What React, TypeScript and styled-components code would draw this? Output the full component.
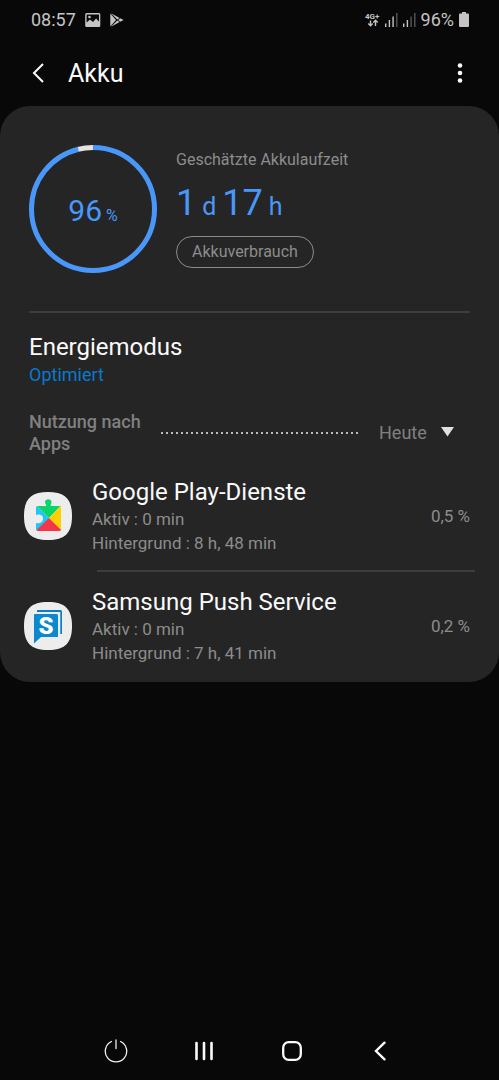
import React from 'react';
import styled, { createGlobalStyle } from 'styled-components';

const GlobalStyle = createGlobalStyle`
  * { box-sizing: border-box; }
  body { margin: 0; background: #080808; }
  button, select { font: inherit; color: inherit; background: none; border: 0; padding: 0; margin: 0; }
  h1, h2, h3, p, ul { margin: 0; padding: 0; font-weight: 400; }
  svg { display: block; flex: none; }
`;

const Screen = styled.div`
  min-height: 100vh;
  display: flex;
  flex-direction: column;
  background: #080808;
  color: #fafafa;
  font-family: Roboto, 'Liberation Sans', sans-serif;
`;

const StatusBar = styled.div`
  display: flex;
  align-items: center;
  justify-content: space-between;
  height: 39px;
  padding: 0 30px 0 31px;
  color: #c4c4c4;
  font-size: 18px;
  line-height: 24px;
`;

const StatusGroup = styled.div<{ $gap: number }>`
  display: flex;
  align-items: center;
  gap: ${p => p.$gap}px;
`;

const AppBar = styled.header`
  display: flex;
  align-items: center;
  height: 67px;
  padding: 0 27px 0 26px;
`;

const IconButton = styled.button`
  display: flex;
  align-items: center;
  justify-content: center;
  width: 24px;
  height: 32px;
`;

const Title = styled.h1`
  flex: 1;
  margin-left: 18px;
  padding-top: 2px;
  font-size: 25px;
  line-height: 32px;
`;

const Card = styled.main`
  padding: 39px 29px 8px;
  border-radius: 30px;
  background: #252525;
`;

const Summary = styled.section`
  display: flex;
  gap: 19px;
  padding-bottom: 38px;
  border-bottom: 2px solid #3d3d3d;
`;

const Gauge = styled.div`
  display: grid;
  place-items: center;
  width: 128px;
  height: 128px;
  > * { grid-area: 1 / 1; }
`;

const GaugeValue = styled.div`
  display: flex;
  align-items: baseline;
  gap: 4px;
  padding-top: 8px;
  color: #4a97fa;
  font-size: 30px;
  line-height: 36px;
`;

const Small = styled.span<{ $size: number }>`
  font-size: ${p => p.$size}px;
`;

const Estimate = styled.div`
  display: flex;
  flex-direction: column;
  align-items: flex-start;
  padding-top: 5px;
`;

const Caption = styled.p`
  color: #8c8c8c;
  font-size: 16px;
  line-height: 20px;
`;

const Duration = styled.p`
  display: flex;
  align-items: baseline;
  gap: 6px;
  margin: 12px 0 8px;
  color: #4a97fa;
  font-size: 36px;
  line-height: 42px;
`;

const UsageButton = styled.button`
  height: 32px;
  padding: 0 15px;
  border: 1px solid #8c8c8c;
  border-radius: 16px;
  color: #8c8c8c;
  font-size: 16px;
  line-height: 20px;
`;

const Mode = styled.section`
  padding-top: 19px;
`;

const ItemTitle = styled.h2`
  font-size: 24px;
  line-height: 30px;
`;

const ModeValue = styled.p`
  color: #0a78cf;
  font-size: 18px;
  line-height: 26px;
`;

const UsageHeader = styled.div`
  display: flex;
  align-items: center;
  margin-top: 23px;
`;

const UsageTitle = styled.h2`
  width: 132px;
  color: #808080;
  font-size: 18px;
  font-weight: 500;
  line-height: 22px;
`;

const Dots = styled.div`
  flex: 1;
  height: 2px;
  background: repeating-linear-gradient(to right, #bcbcbc 0 2px, transparent 2px 5px);
`;

const Period = styled.label`
  position: relative;
  margin: 0 16px 0 20px;
  color: #808080;
  font-size: 18px;
  svg {
    position: absolute;
    right: 0;
    top: 6px;
    pointer-events: none;
  }
`;

const PeriodSelect = styled.select`
  appearance: none;
  display: block;
  width: 75px;
  height: 24px;
  line-height: 24px;
`;

const AppList = styled.ul`
  list-style: none;
  margin: 19px 0 0 -5px;
`;

const AppRow = styled.li`
  display: flex;
  align-items: center;
  gap: 20px;
  height: 90px;
  padding-bottom: 6px;
  & + & { margin-top: 20px; }
  & + &::before {
    content: '';
    position: absolute;
    left: 97px;
    right: 24px;
    margin-top: -110px;
    border-top: 2px solid #3d3d3d;
  }
`;

const AppText = styled.div`
  flex: 1;
`;

const Detail = styled.p`
  color: #8c8c8c;
  font-size: 17px;
  line-height: 24px;
`;

const NavBar = styled.nav`
  display: flex;
  justify-content: center;
  height: 58px;
  margin-top: auto;
  padding-right: 4px;
`;

const NavButton = styled.button`
  display: flex;
  align-items: center;
  justify-content: center;
  width: 88px;
`;

const Signal = ({ on }: { on: number }) => (
  <svg width="13" height="14" viewBox="0 0 13 14">
    {[0, 1, 2, 3].map(i => (
      <rect key={i} x={i * 3.7} y={10.5 - i * 3.5} width="1.4" height={3.5 + i * 3.5} fill={i < on ? '#c4c4c4' : '#565656'} />
    ))}
  </svg>
);

const squircle = 'M24 0C41 0 48 7 48 24S41 48 24 48S0 41 0 24S7 0 24 0Z';

const PlayServicesIcon = () => (
  <svg width="48" height="48" viewBox="0 0 48 48">
    <path d={squircle} fill="#ededed" />
    <path d="M13 14L25.500 26.500L13 38.500Q12 38 12 37V31C14 32 19 31 19 26.500C19 22 14 22 12 23V15.500Q12 14.500 13 14Z" fill="#22c5f5" />
    <path d="M13 14H22C23 13 21 12 21 10A3.300 3.300 0 0 1 27.500 10C27.500 12 26 13 27 14H36.500L25 26Z" fill="#0ad56b" />
    <path d="M36.500 14Q37 14.500 37 15.500V37Q37 38 36.500 38.500L25 26Z" fill="#ffd000" />
    <path d="M25 26L37 38Q36.500 39 35.500 39H14Q13 39 12.500 38Z" fill="#f5364a" />
  </svg>
);

const PushServiceIcon = () => (
  <svg width="48" height="48" viewBox="0 0 48 48">
    <path d={squircle} fill="#ededed" />
    <path d="M13 8H36.500Q38 8 38 9.500V32H36.300V10H13Z" fill="#0c7fc4" />
    <path d="M11 12H32.500Q34 12 34 13.500V35H17L10 41.500V13Q10 12 11 12Z" fill="#0c88cf" />
    <text x="22" y="32" textAnchor="middle" fill="#fff" fontFamily="Roboto, sans-serif" fontWeight="900" fontSize="24">S</text>
  </svg>
);

const apps = [
  { name: 'Google Play-Dienste', active: '0 min', background: '8 h, 48 min', share: '0,5 %', Icon: PlayServicesIcon },
  { name: 'Samsung Push Service', active: '0 min', background: '7 h, 41 min', share: '0,2 %', Icon: PushServiceIcon },
];

const ringLength = 2 * Math.PI * 61.5;

export default function App() {
  return (
    <Screen>
      <GlobalStyle />
      <StatusBar>
        <StatusGroup $gap={9}>
          <span>08:57</span>
          <svg width="16" height="14" viewBox="0 0 16 14">
            <path fillRule="evenodd" fill="#c4c4c4" d="M1.500 0H14Q15.300 0 15.300 1.500V12.500Q15.300 14 14 14H1.500Q.2 14 .2 12.500V1.500Q.2 0 1.500 0ZM1.600 1.500V9.500L5 6.500L8 9L11 5.500L14 8.500V1.500Z" />
            <circle cx="4.500" cy="4" r="1.300" fill="#c4c4c4" />
          </svg>
          <svg width="14" height="14" viewBox="0 0 14 14" fill="#c4c4c4">
            <path d="M.3 .6L6 7L.3 13.400Z" />
            <path d="M1 .2L9.600 4.900L7.300 6.600Z" />
            <path d="M1 13.800L9.600 9.100L7.300 7.400Z" />
            <path d="M10.300 5.200L13.600 7L10.300 8.800L8.200 7Z" />
          </svg>
        </StatusGroup>
        <StatusGroup $gap={5}>
          <svg width="15" height="16" viewBox="0 0 15 16" fill="none" stroke="#c4c4c4">
            <text x="0" y="6.500" fill="#c4c4c4" stroke="none" fontFamily="Roboto, sans-serif" fontWeight="700" fontSize="8">4G+</text>
            <path strokeWidth="1.400" d="M5.500 8.500V13.500M3.300 11.500L5.500 13.700L7.700 11.500M10.500 14V8.500M8.300 10.500L10.500 8.300L12.700 10.500" />
          </svg>
          <Signal on={3} />
          <Signal on={2} />
          <span>96%</span>
          <svg width="10" height="15" viewBox="0 0 10 15">
            <path fill="#c4c4c4" d="M3 0H7V1.600H9Q10 1.600 10 2.600V14Q10 15 9 15H1Q0 15 0 14V2.600Q0 1.600 1 1.600H3Z" />
          </svg>
        </StatusGroup>
      </StatusBar>

      <AppBar>
        <IconButton aria-label="Zurück">
          <svg width="12" height="20" viewBox="0 0 12 20" fill="none" stroke="#fafafa" strokeWidth="2">
            <path d="M11 1L2 10L11 19" />
          </svg>
        </IconButton>
        <Title>Akku</Title>
        <IconButton aria-label="Weitere Optionen">
          <svg width="6" height="20" viewBox="0 0 6 20" fill="#fafafa">
            <circle cx="3" cy="2.500" r="2.300" />
            <circle cx="3" cy="10" r="2.300" />
            <circle cx="3" cy="17.500" r="2.300" />
          </svg>
        </IconButton>
      </AppBar>

      <Card>
        <Summary>
          <Gauge>
            <svg width="128" height="128" viewBox="0 0 128 128" fill="none" strokeWidth="5">
              <circle cx="64" cy="64" r="61.500" stroke="#e6e3e0" strokeDasharray={`${ringLength * 0.04} ${ringLength}`} transform="rotate(-104.400 64 64)" />
              <circle cx="64" cy="64" r="61.500" stroke="#4a97fa" strokeDasharray={`${ringLength * 0.96} ${ringLength}`} transform="rotate(-90 64 64)" />
            </svg>
            <GaugeValue>
              <span>96</span>
              <Small $size={16}>%</Small>
            </GaugeValue>
          </Gauge>
          <Estimate>
            <Caption>Geschätzte Akkulaufzeit</Caption>
            <Duration>
              <span>1</span>
              <Small $size={25}>d</Small>
              <span>17</span>
              <Small $size={25}>h</Small>
            </Duration>
            <UsageButton>Akkuverbrauch</UsageButton>
          </Estimate>
        </Summary>

        <Mode>
          <ItemTitle>Energiemodus</ItemTitle>
          <ModeValue>Optimiert</ModeValue>
        </Mode>

        <UsageHeader>
          <UsageTitle>Nutzung nach Apps</UsageTitle>
          <Dots />
          <Period>
            <PeriodSelect aria-label="Zeitraum">
              <option>Heute</option>
            </PeriodSelect>
            <svg width="13" height="10" viewBox="0 0 13 10">
              <path fill="#e0e0e0" d="M0 0H13L6.500 9.500Z" />
            </svg>
          </Period>
        </UsageHeader>

        <AppList>
          {apps.map(({ name, active, background, share, Icon }) => (
            <AppRow key={name}>
              <Icon />
              <AppText>
                <ItemTitle as="h3">{name}</ItemTitle>
                <Detail>Aktiv : {active}</Detail>
                <Detail>Hintergrund : {background}</Detail>
              </AppText>
              <Detail>{share}</Detail>
            </AppRow>
          ))}
        </AppList>
      </Card>

      <NavBar>
        <NavButton aria-label="Ein/Aus">
          <svg width="24" height="24" viewBox="0 0 24 24" fill="none" stroke="#f0f0f0" strokeWidth="1.300" strokeLinecap="round">
            <path d="M12 1V9.500M7.500 2.500A10.700 10.700 0 1 0 16.500 2.500" />
          </svg>
        </NavButton>
        <NavButton aria-label="Letzte Apps">
          <svg width="18" height="20" viewBox="0 0 18 20" stroke="#fafafa" strokeWidth="2.600" strokeLinecap="round">
            <path d="M1.500 2V18M9 2V18M16.500 2V18" />
          </svg>
        </NavButton>
        <NavButton aria-label="Startseite">
          <svg width="20" height="20" viewBox="0 0 20 20" fill="none" stroke="#fafafa" strokeWidth="2.300">
            <rect x="1.200" y="1.200" width="17.600" height="17.600" rx="5.500" />
          </svg>
        </NavButton>
        <NavButton aria-label="Zurück">
          <svg width="12" height="20" viewBox="0 0 12 20" fill="none" stroke="#fafafa" strokeWidth="2.400" strokeLinecap="round">
            <path d="M10.500 1.700L2 10L10.500 18.300" />
          </svg>
        </NavButton>
      </NavBar>
    </Screen>
  );
}
